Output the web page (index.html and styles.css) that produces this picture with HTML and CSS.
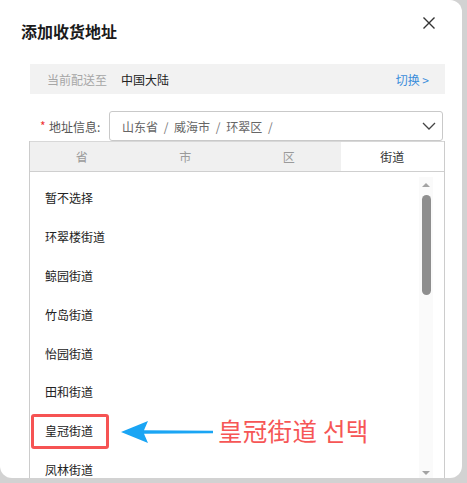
FILE: index.html
```html
<!DOCTYPE html>
<html lang="zh">
<head>
<meta charset="utf-8">
<link rel="stylesheet" href="styles.css">
</head>
<body>
<div class="dialog">
  <div class="header">
    <div class="title">添加收货地址</div>
    <svg class="close" width="14" height="14" viewBox="0 0 14 14"><path d="M1.5 1.5 L12.5 12.5 M12.5 1.5 L1.5 12.5" stroke="#333" stroke-width="1.4" fill="none"/></svg>
  </div>
  <div class="region-bar">
    <span class="rb-label">当前配送至</span>
    <span class="rb-value">中国大陆</span>
    <span class="rb-switch">切换 &gt;</span>
  </div>
  <div class="addr-row">
    <span class="req">*</span>
    <span class="addr-label">地址信息:</span>
    <div class="select">
      <span class="sel-text">山东省 <i>/</i> 威海市 <i>/</i> 环翠区 <i>/</i></span>
      <svg class="chev" width="14" height="8" viewBox="0 0 14 8"><path d="M1 1 L7 7 L13 1" stroke="#444" stroke-width="1.3" fill="none"/></svg>
    </div>
  </div>
  <div class="panel">
    <div class="tabs">
      <div class="tab">省</div>
      <div class="tab">市</div>
      <div class="tab">区</div>
      <div class="tab active">街道</div>
    </div>
    <div class="list-wrap">
      <ul class="list">
        <li>暂不选择</li>
        <li>环翠楼街道</li>
        <li>鲸园街道</li>
        <li>竹岛街道</li>
        <li>怡园街道</li>
        <li>田和街道</li>
        <li>皇冠街道</li>
        <li>凤林街道</li>
      </ul>
      <div class="scrollbar">
        <div class="arrow-up"></div>
        <div class="thumb"></div>
        <div class="spacer"></div>
        <div class="arrow-down"></div>
      </div>
    </div>
  </div>
  <div class="highlight"></div>
  <svg class="pointer" width="96" height="24" viewBox="0 0 96 24">
    <path d="M0 12 L27 1 L23 10.2 L92 10.8 L92 13.2 L23 13.8 L27 23 Z" fill="#1aa5f4"/>
  </svg>
  <div class="note">皇冠街道 선택</div>
</div>
</body>
</html>
```

FILE: styles.css
```css
* { box-sizing: border-box; }
html, body { margin: 0; padding: 0; }
body {
  background: #d2d2d2;
  width: 467px;
  height: 483px;
  overflow: hidden;
  font-family: "Noto Sans CJK SC", "Noto Sans", sans-serif;
}
.dialog {
  position: relative;
  width: 462px;
  height: 478px;
  background: #fff;
  border-radius: 0 12px 12px 12px;
  overflow: hidden;
}
.header {
  display: flex;
  justify-content: space-between;
  align-items: center;
  padding: 21px 26px 0 21px;
  height: 43px;
}
.title {
  font-size: 16px;
  font-weight: bold;
  color: #1b1b1b;
  line-height: 22px;
  margin-top: -2px;
}
.close { margin-top: -19px; }
.region-bar {
  margin: 21px 17px 0 30px;
  height: 30px;
  background: #f2f2f2;
  display: flex;
  align-items: center;
  padding: 0 16px 0 17px;
  font-size: 12px;
}
.rb-label { color: #a6a6a6; width: 74px; }
.rb-value { color: #222; }
.rb-switch { margin-left: auto; color: #3a8ddb; }
.addr-row {
  display: flex;
  align-items: center;
  margin: 17px 19px 0 40px;
  font-size: 12px;
}
.req { color: #e33; width: 9px; font-size: 12px; position: relative; top: -1px; }
.addr-label { color: #555; width: 60px; }
.select {
  flex: 1;
  height: 30px;
  border: 1px solid #c9c9c9;
  border-radius: 3px;
  display: flex;
  align-items: center;
  padding: 0 6px 0 12px;
  color: #666;
}
.sel-text i { font-style: normal; color: #777; margin: 0 3px; }
.chev { margin-left: auto; }
.panel {
  margin: 0 17px 0 29px;
  border-left: 1px solid #ccc;
  border-right: 1px solid #ccc;
  height: 340px;
}
.tabs {
  display: flex;
  height: 31px;
  background: #f0f0f0;
  border-bottom: 1px solid #cfcfcf;
  border-top: 1px solid #d8d8d8;
}
.tab {
  flex: 1;
  display: flex;
  align-items: center;
  justify-content: center;
  font-size: 12px;
  color: #9a9a9a;
}
.tab.active { background: #fff; color: #333; }
.list-wrap {
  display: flex;
  height: 320px;
}
.list {
  list-style: none;
  margin: 0;
  padding: 7px 0 0 15px;
  flex: 1;
}
.list li {
  height: 38.9px;
  line-height: 38px;
  font-size: 12px;
  color: #222;
}
.scrollbar {
  width: 14px;
  margin: 5px 11px 0 0;
  background: #fafafa;
  display: flex;
  flex-direction: column;
  align-items: center;
  height: 302px;
}
.arrow-up {
  margin-top: 6px;
  width: 0; height: 0;
  border-left: 4px solid transparent;
  border-right: 4px solid transparent;
  border-bottom: 4px solid #a3a3a3;
}
.thumb {
  margin-top: 8px;
  width: 9px;
  height: 100px;
  background: #8e8e8e;
  border-radius: 4.5px;
}
.spacer { flex: 1; }
.arrow-down {
  margin-bottom: 4px;
  width: 0; height: 0;
  border-left: 4px solid transparent;
  border-right: 4px solid transparent;
  border-top: 4px solid #a3a3a3;
}
.highlight {
  position: absolute;
  left: 31px;
  top: 414px;
  width: 78px;
  height: 35px;
  border: 3px solid #f65353;
  border-radius: 3px;
}
.pointer {
  position: absolute;
  left: 121px;
  top: 420px;
}
.note {
  position: absolute;
  left: 218px;
  top: 413px;
  font-family: "Noto Sans CJK KR", "Noto Sans CJK SC", sans-serif;
  font-size: 24.5px;
  line-height: 36px;
  letter-spacing: 0.3px;
  color: #f65656;
}
```
